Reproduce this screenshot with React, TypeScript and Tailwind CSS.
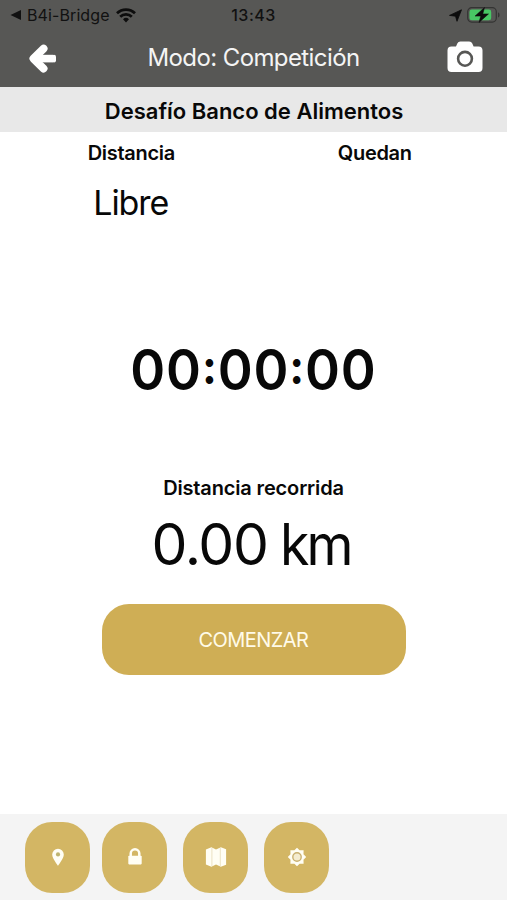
import { ReactNode } from "react";
import clsx from "clsx";

function BackArrow() {
  return (
    <svg width="30" height="32" viewBox="0 0 30 32" fill="none" stroke="#fff" strokeLinecap="round" strokeLinejoin="round" aria-hidden="true">
      <path d="M14.600 5.600 4.400 15.600l10.200 10" strokeWidth="7.800" />
      <path d="M8 15.600h16" strokeWidth="7.600" strokeLinecap="butt" />
      <path d="M25 13.800v3.600" strokeWidth="4" />
    </svg>
  );
}

function CameraIcon() {
  return (
    <svg width="36" height="32" viewBox="0 0 36 32" aria-hidden="true">
      <path d="M4.500 5.500H9l1.300-3Q11.200.5 13.400.5h8.800q2.200 0 3.100 2l1.300 3h4.900q4 0 4 4v17.500q0 4-4 4h-27q-4 0-4-4V9.500q0-4 4-4Z" fill="#fff" />
      <circle cx="18" cy="17.800" r="6.900" fill="none" stroke="#575755" strokeWidth="2.600" />
    </svg>
  );
}

function WifiIcon() {
  return (
    <svg width="20" height="15" viewBox="0 0 20 15" fill="none" stroke="#0d0d0d" strokeWidth="2.700" aria-hidden="true">
      <path d="M1 5.300a12.700 12.700 0 0 1 18 0" />
      <path d="M4.200 8.700a8.200 8.200 0 0 1 11.600 0" />
      <path d="m10 14.500-3-3.200a4.300 4.300 0 0 1 6 0Z" fill="#0d0d0d" stroke="none" />
    </svg>
  );
}

function LocationIcon() {
  return (
    <svg width="13" height="13" viewBox="0 0 13 13" aria-hidden="true">
      <path d="M12.500.8 8 12.300 6.500 7.200.5 6.400Z" fill="#0d0d0d" stroke="#0d0d0d" strokeWidth=".8" strokeLinejoin="round" />
    </svg>
  );
}

function BatteryIcon() {
  return (
    <svg width="33" height="18" viewBox="0 0 33 18" aria-hidden="true">
      <rect x=".7" y="1.700" width="28.600" height="14.400" rx="4" fill="none" stroke="#343433" strokeWidth="1.200" />
      <rect x="2.500" y="3.500" width="21.700" height="10.800" rx="2.400" fill="#48c764" />
      <path d="M31 6.200q1.600.5 1.600 2.700T31 11.600Z" fill="#343433" />
      <path d="M17.500 1.500 8 10.100h5.700L12 16.500l9.500-8.600h-5.700Z" fill="#0d0d0d" stroke="#0d0d0d" strokeWidth=".5" />
    </svg>
  );
}

function PinIcon() {
  return (
    <svg width="20" height="20" viewBox="0 0 20 20" aria-hidden="true">
      <path d="M10 1.800a5.800 5.800 0 0 0-5.800 5.800c0 4 5.800 11.200 5.800 11.200s5.800-7.200 5.800-11.200A5.800 5.800 0 0 0 10 1.800Z" fill="#fffef4" />
      <circle cx="10" cy="7.400" r="2.100" fill="#bfb46f" />
    </svg>
  );
}

function LockIcon() {
  return (
    <svg width="20" height="20" viewBox="0 0 20 20" aria-hidden="true">
      <path d="M5.700 10V6.600a4.300 4.300 0 0 1 8.600 0V10" fill="none" stroke="#fffef4" strokeWidth="2.500" />
      <rect x="3.300" y="8.800" width="13.400" height="8.600" rx=".8" fill="#fffef4" />
    </svg>
  );
}

function MapIcon() {
  return (
    <svg width="22" height="22" viewBox="0 0 22 22" aria-hidden="true">
      <path d="m.9 3.600 5.500-2.400 4.600 2.400 4.900-2.400 5.200 2v15.500l-5.200 2.100-4.900-2.200-4.600 2.200L.9 18.600Z" fill="#fffef4" />
      <path d="M6.900 2v18M15.300 2v18" stroke="#e6dab6" strokeWidth=".8" />
    </svg>
  );
}

function GearIcon() {
  return (
    <svg width="20" height="20" viewBox="0 0 20 20" aria-hidden="true">
      <path d="m10 .8 2.600 2.500 4-.1-.1 4L19.200 10l-2.700 2.800.1 4-4-.1L10 19.200l-2.600-2.500-4 .1.100-4L.8 10l2.700-2.800-.1-4 4 .1Z" fill="#fffef4" />
      <circle cx="10" cy="10" r="4.200" fill="#f4ecd0" stroke="#c9b070" strokeWidth="1.400" />
    </svg>
  );
}

function Colon() {
  return <span className="relative -top-[6px] text-[48px] leading-none font-bold">:</span>;
}

function ToolButton({ label, className, children }: { label: string; className?: string; children: ReactNode }) {
  return (
    <button
      aria-label={label}
      className={clsx("flex h-[71px] w-[65px] items-center justify-center rounded-[27px] bg-[#d3b664]", className)}
    >
      {children}
    </button>
  );
}

export default function App() {
  return (
    <div className="flex h-[900px] w-full flex-col overflow-hidden bg-white font-['Inter',sans-serif] text-[#080808]">
      <header className="h-[87px] bg-[#575755]">
        <div className="grid h-[30px] grid-cols-3 items-center text-[#111]">
          <div className="flex items-center pl-[10px]">
            <svg width="12" height="12" viewBox="0 0 12 12" aria-hidden="true">
              <path d="M.5 6 11 1v10Z" fill="#111" />
            </svg>
            <span className="ml-[5px] text-[16px] tracking-[0.1px] whitespace-nowrap">B4i-Bridge</span>
            <span className="ml-[6px]">
              <WifiIcon />
            </span>
          </div>
          <span className="text-center text-[16px] font-medium tracking-[0.5px]">13:43</span>
          <div className="flex items-center justify-end gap-[5px] pr-[7px]">
            <LocationIcon />
            <BatteryIcon />
          </div>
        </div>
        <div className="flex h-[57px] items-center justify-between pr-6 pl-[29px]">
          <button aria-label="Volver">
            <BackArrow />
          </button>
          <h1 className="pb-px pl-px text-[24px] tracking-[-0.6px] text-[#f4f4f4]">Modo: Competición</h1>
          <button aria-label="Cámara" className="pb-[3px]">
            <CameraIcon />
          </button>
        </div>
      </header>

      <h2 className="flex h-[45px] items-center justify-center bg-[#e8e8e8] pt-[3px] pl-px text-[22px] font-semibold">
        Desafío Banco de Alimentos
      </h2>

      <main className="flex flex-1 flex-col items-center">
        <div className="grid h-[100px] w-full grid-cols-2 text-center">
          <div className="pl-[9px]">
            <p className="pt-[6px] text-[20px] leading-[30px] font-semibold tracking-[-0.3px]">Distancia</p>
            <p className="pt-[13px] pr-px text-[34px] leading-[44px] tracking-[-1.1px]">Libre</p>
          </div>
          <p className="pr-[11px] pt-[6px] text-[20px] leading-[30px] font-semibold tracking-[-0.3px]">Quedan</p>
        </div>
        <p className="mt-[103px] h-[70px] scale-x-[0.93] text-[57px] leading-[70px] font-semibold tracking-[0.9px] whitespace-nowrap">
          00
          <Colon />
          00
          <Colon />
          00
        </p>
        <p className="mt-[68px] text-[20px] leading-[30px] font-semibold tracking-[-0.15px]">Distancia recorrida</p>
        <p className="mt-[7px] text-[57px] leading-[70px] tracking-[-1.300px] [word-spacing:-2px]">
          0.00 <span className="inline-block origin-left scale-x-[0.94] tracking-[-3.000px]">km</span>
        </p>
        <button className="mt-[24px] h-[71px] w-[304px] rounded-[27px] bg-[#cfae55] pt-px text-[20px] tracking-[-0.55px] text-[#fffbe9]">
          COMENZAR
        </button>
      </main>

      <footer className="flex h-[86px] items-center bg-[#f4f4f4] pl-[25px]">
        <ToolButton label="Ubicación">
          <PinIcon />
        </ToolButton>
        <ToolButton label="Bloquear" className="ml-3">
          <LockIcon />
        </ToolButton>
        <ToolButton label="Mapa" className="ml-4">
          <MapIcon />
        </ToolButton>
        <ToolButton label="Ajustes" className="ml-4">
          <GearIcon />
        </ToolButton>
      </footer>
    </div>
  );
}
